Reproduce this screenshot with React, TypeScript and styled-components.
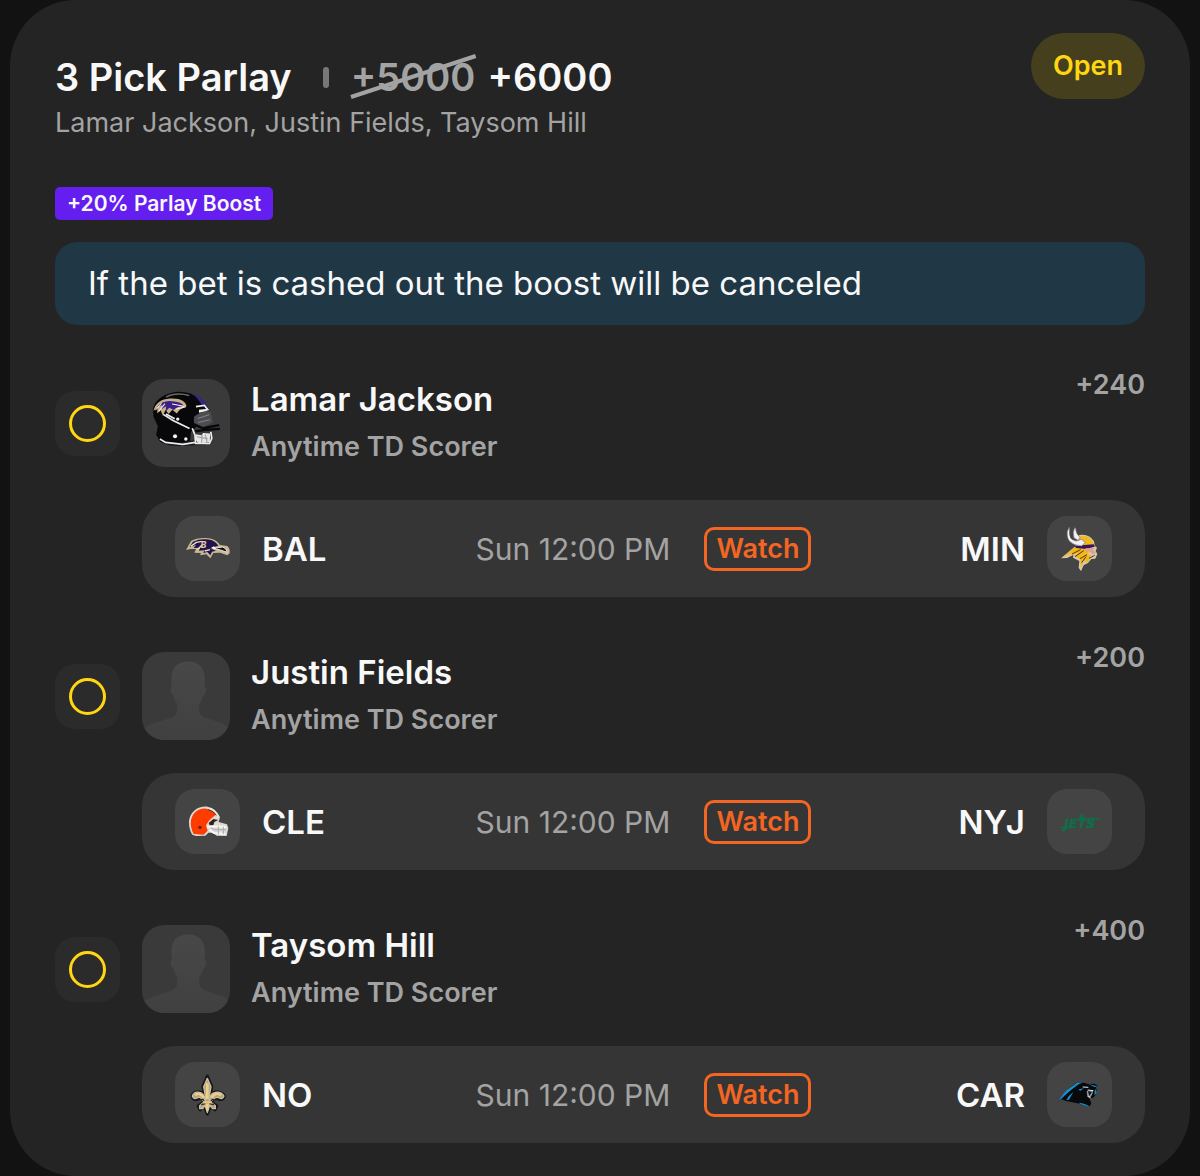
import React from "react";
import styled, { createGlobalStyle } from "styled-components";

const color = {
  page: "#121212",
  card: "#242424",
  panel: "#353535",
  tile: "#444444",
  avatar: "#3a3a3a",
  status: "#2b2b2b",
  text: "#f8f8f8",
  muted: "#a3a3a3",
  yellow: "#ffd60f",
  orange: "#f26522",
  purple: "#641ef0",
  notice: "#203746",
};

const GlobalStyle = createGlobalStyle`
  *, *::before { box-sizing: border-box; }
  body {
    margin: 0;
    background: ${color.page};
    color: ${color.text};
    font-family: Inter, "Liberation Sans", sans-serif;
  }
  h1, h2, p, ul { margin: 0; padding: 0; }
`;

const Page = styled.main`
  padding: 0 10px;
`;

const Card = styled.article`
  padding: 33px 45px;
  border-radius: 66px;
  background: ${color.card};
`;

const Header = styled.header`
  display: flex;
  justify-content: space-between;
  align-items: flex-start;
`;

const Summary = styled.div`
  padding-top: 20px;
`;

const TitleRow = styled.div`
  display: flex;
  align-items: center;
`;

const Title = styled.h1`
  font-size: 38px;
  line-height: 48px;
  font-weight: 600;
`;

const Divider = styled.span`
  width: 6px;
  height: 21px;
  margin: 0 22px 0 31px;
  border-radius: 3px;
  background: #777777;
`;

const Price = styled.span`
  font-size: 38px;
  line-height: 48px;
  font-weight: 600;
`;

const OldPrice = styled.s`
  position: relative;
  margin-right: 12px;
  color: ${color.muted};
  font-size: 38px;
  line-height: 48px;
  font-weight: 600;
  text-decoration: none;
`;

const Strike = styled.svg`
  position: absolute;
  inset: 0;
  width: 100%;
  height: 100%;
  overflow: visible;
`;

const Players = styled.p`
  color: ${color.muted};
  font-size: 27px;
  line-height: 44px;
`;

const Badge = styled.span`
  padding: 16px 22px;
  border-radius: 33px;
  background: #463f1e;
  color: ${color.yellow};
  font-size: 27px;
  line-height: 34px;
  font-weight: 600;
`;

const Boost = styled.span`
  display: block;
  width: fit-content;
  margin-top: 42px;
  padding: 0 12px;
  border-radius: 5px;
  background: ${color.purple};
  font-size: 21px;
  line-height: 33px;
  font-weight: 600;
`;

const Notice = styled.p`
  margin-top: 22px;
  padding: 20px 33px;
  border-radius: 22px;
  background: ${color.notice};
  font-size: 33px;
  line-height: 43px;
`;

const Legs = styled.ul`
  display: grid;
  gap: 55px;
  margin-top: 54px;
  list-style: none;
`;

const Leg = styled.li`
  display: grid;
  grid-template-columns: 65px 1fr;
  column-gap: 22px;
  row-gap: 33px;
  align-items: center;
`;

const Status = styled.span`
  display: grid;
  place-items: center;
  height: 65px;
  border-radius: 20px;
  background: ${color.status};
  &::before {
    content: "";
    width: 37px;
    height: 37px;
    border: 3px solid ${color.yellow};
    border-radius: 50%;
  }
`;

const Pick = styled.div`
  display: flex;
  align-items: center;
  gap: 21px;
`;

const Avatar = styled.span`
  display: block;
  width: 88px;
  height: 88px;
  border-radius: 22px;
  overflow: hidden;
  background: ${color.avatar};
  svg { display: block; width: 100%; height: 100%; }
`;

const PickText = styled.div`
  display: grid;
  gap: 8px;
  flex: 1;
`;

const Name = styled.h2`
  font-size: 33px;
  line-height: 40px;
  font-weight: 600;
`;

const Market = styled.p`
  color: ${color.muted};
  font-size: 27px;
  line-height: 40px;
  font-weight: 600;
`;

const Odds = styled.span`
  align-self: flex-start;
  color: ${color.muted};
  font-size: 27px;
  line-height: 12px;
  font-weight: 600;
`;

const Match = styled.div`
  grid-column: 2;
  display: grid;
  grid-template-columns: 1fr auto 1fr;
  align-items: center;
  padding: 16px 33px;
  border-radius: 33px;
  background: ${color.panel};
`;

const Team = styled.div<{ $away?: boolean }>`
  display: flex;
  flex-direction: ${(p) => (p.$away ? "row-reverse" : "row")};
  align-items: center;
  gap: 22px;
  font-size: 33px;
  line-height: 44px;
  font-weight: 600;
`;

const LogoTile = styled.span`
  width: 65px;
  height: 65px;
  border-radius: 20px;
  background: ${color.tile};
  svg { display: block; width: 100%; height: 100%; }
`;

const Kickoff = styled.div`
  display: flex;
  align-items: center;
  gap: 34px;
`;

const Time = styled.time`
  color: ${color.muted};
  font-size: 30px;
  line-height: 44px;
`;

const Watch = styled.button`
  padding: 0 9px;
  border: 3px solid ${color.orange};
  border-radius: 10px;
  background: transparent;
  color: ${color.orange};
  font: 600 27px/38px Inter, "Liberation Sans", sans-serif;
  cursor: pointer;
`;

const RavensHelmet = () => (
  <svg viewBox="36 28 261 261" aria-hidden="true">
    <path d="M82 205Q98 226 138 227L221 224 238 216 223 209 147 213Z" fill="#191919" />
    <path d="M68 119C72 91 103 69 142 66C191 65 226 90 239 129L241 150 192 153 196 171 181 185 179 211 125 220 91 215 78 193 83 168 70 139Z" fill="#08080a" />
    <path d="M181 71C207 77 225 94 233 117L213 105Q201 82 181 71Z" fill="#35258a" />
    <path d="M107 82Q136 66 176 77" fill="none" stroke="#69696c" strokeWidth="4" />
    <path d="M70 123C75 99 93 88 119 86C149 84 167 95 168 109L148 119 139 130 126 119 115 132 106 119 98 137 91 120 81 130 82 112Z" fill="#c8b18a" />
    <path d="M80 112Q98 88 132 95Q151 96 160 107L141 112 130 120 117 113 107 124 107 109 94 118 96 105Z" fill="#38208a" />
    <path d="M76 120L94 100M86 124L104 101M125 102L161 109M135 118L166 110" stroke="#f1eee5" strokeWidth="3" fill="none" />
    <path d="M196 110L221 106 231 119 205 122M205 126L229 121" fill="none" stroke="#f0f0f0" strokeWidth="5" />
    <path d="M190 140Q212 120 239 124L246 157 215 172 190 162Z" fill="#4c4c51" />
    <path d="M201 145L235 134M203 157L237 149" stroke="#818187" strokeWidth="3" />
    <path d="M99 133L128 151 177 175M107 132L133 146M185 174L193 194 195 219 236 219 243 204 240 185M89 206L106 216 157 222 194 216" fill="none" stroke="#ededed" strokeWidth="5" />
    <path d="M183 159L217 174 265 165M194 183L226 179 267 176" fill="none" stroke="#08080a" strokeWidth="7" />
    <path d="M195 192L213 195 217 188 238 190 237 215 204 220 196 210Z" fill="#e6e6e6" />
    <path d="M200 199L231 205M214 193L213 217M224 193L229 216" stroke="#99999b" strokeWidth="3" />
    <g fill="#f2f2f2"><circle cx="142" cy="147" r="5" /><circle cx="134" cy="198" r="6" /><circle cx="166" cy="206" r="5" /></g>
  </svg>
);

const Silhouette = () => (
  <svg viewBox="305 38 262 262" aria-hidden="true">
    <defs>
      <linearGradient id="body" x1="0" y1="0" x2="0" y2="1">
        <stop offset="0" stopColor="#484848" />
        <stop offset="1" stopColor="#404040" />
      </linearGradient>
    </defs>
    <path d="M305 272Q318 257 347 249L396 232Q410 225 410 211V193Q401 181 398 167Q391 163 390 148L394 141C388 97 398 67 442 66C484 66 497 96 491 140L496 147Q495 165 487 169Q484 184 475 195V211Q476 226 490 232L539 249Q557 257 568 269V300H305Z" fill="url(#body)" />
  </svg>
);

const Ravens = () => (
  <svg viewBox="28 33 195 195" aria-hidden="true">
    <path d="M61 135L76 108Q91 99 115 99C141 98 154 107 163 120L185 123Q194 131 192 145L185 151L163 143L143 144L134 160L122 148L103 151L106 144L86 143L91 132L75 132Z" fill="#c7b893" />
    <path d="M71 127L82 110Q103 101 120 103C140 103 151 112 158 122L146 126L138 132L151 137L139 140L134 151L125 141L113 144L116 136L99 137L104 128L84 129L91 120Z" fill="#24124f" />
    <path d="M75 124L92 112 110 109M95 134L109 120M117 138L133 134" fill="none" stroke="#ece1be" strokeWidth="4" />
    <path d="M144 130L171 126Q183 130 185 142L164 135Z" fill="#111" stroke="#e8e4dc" strokeWidth="3" />
    <text x="105" y="129" fontFamily="Inter, sans-serif" fontSize="25" fontWeight="800" fontStyle="italic" fill="#dccb9c">B</text>
    <path d="M134 130L145 124 151 131Z" fill="#fff" />
  </svg>
);

const Vikings = () => (
  <svg viewBox="22 33 195 195" aria-hidden="true">
    <path d="M64 160L87 140 108 123 112 101 119 90Q149 85 163 109L165 122 172 128 168 138 173 147 167 161 155 162 145 174 132 181 124 199 117 188 119 168 100 158 101 150 82 159Z" fill="#d8c8ae" />
    <path d="M119 94Q148 89 160 111L161 121 109 121ZM70 156L105 127 151 135 142 151 154 147 148 167 140 172 133 165 124 190 122 164 104 153 113 144 91 152 100 143Z" fill="#f3b919" />
    <path d="M105 122L162 118 165 125 139 132 109 129Z" fill="#37145d" />
    <path d="M137 130L166 128 160 134 169 143 159 148 149 139 140 143Z" fill="#dfa18f" />
    <path d="M97 147L123 134M106 155L132 137M121 161L142 149M126 173L139 155M148 160L165 151" fill="none" stroke="#57330f" strokeWidth="3" />
    <path d="M89 66L83 79Q80 99 91 110Q103 122 126 123L137 112 125 103 110 108Q94 106 91 91ZM105 68Q98 82 103 99L116 106 121 97Q108 86 108 70Z" fill="#f2f1f3" stroke="#706e75" strokeWidth="2" />
    <path d="M94 72Q87 94 99 103" fill="none" stroke="#444" strokeWidth="4" />
  </svg>
);

const Browns = () => (
  <svg viewBox="28 33 195 195" aria-hidden="true">
    <path d="M80 170Q69 153 70 128C75 98 99 83 126 86Q151 91 163 117L159 132L184 139L188 151L183 174L153 173L141 164L128 164L119 173L91 174Z" fill="#ddd9d3" />
    <path d="M84 168Q73 148 76 125C85 95 108 87 132 94Q147 99 152 109L131 127L121 142L126 158L114 170Z" fill="#ff3c00" />
    <path d="M124 91Q151 96 158 119M133 91Q150 98 155 111" fill="none" stroke="#f0e7de" strokeWidth="4" />
    <path d="M126 94Q145 99 152 112" fill="none" stroke="#583021" strokeWidth="3" />
    <path d="M129 135L143 123 158 126 146 132 143 142 132 142Z" fill="#392117" />
    <circle cx="103" cy="148" r="5" fill="#5d2515" />
    <path d="M124 147L147 145 182 147M131 155L145 165 179 168" fill="none" stroke="#f8f8f5" strokeWidth="6" />
    <path d="M136 149L146 155 181 155M158 145L158 168M173 146L173 168" fill="none" stroke="#a9adad" strokeWidth="3" />
  </svg>
);

const Jets = () => (
  <svg viewBox="22 33 195 195" aria-hidden="true">
    <text x="74" y="150" fontFamily="DejaVu Sans, sans-serif" fontSize="38" fontWeight="700" fontStyle="italic" fill="#126b49" stroke="#126b49" strokeWidth="2">JETS</text>
    <path d="M119 119L126 103 134 119 182 120 178 124 114 124ZM58 150L70 144 88 145 86 151Z" fill="#126b49" />
  </svg>
);

const Saints = () => (
  <svg viewBox="28 33 195 195" aria-hidden="true">
    <g stroke="#171717" strokeWidth="10" strokeLinejoin="round" fill="#171717">
      <path d="M125 76L112 107 119 140 115 162 125 189 135 162 131 140 138 107Z" />
      <path d="M118 143C116 119 86 118 79 135Q82 150 98 143L107 141 115 154 98 165 103 176 119 164M132 143C134 119 164 118 176 135Q173 150 157 143L148 141 136 154 153 165 148 176 131 164" />
    </g>
    <g stroke="#c9bfae" strokeWidth="4" strokeLinejoin="round" fill="#b9a47b">
      <path d="M125 82L114 107 120 140 118 162 125 185 132 162 130 140 136 107Z" />
      <path d="M118 145C116 119 86 118 80 135Q84 147 94 141Q104 135 109 147L116 152 102 164 102 173 111 173 119 162ZM132 145C134 119 164 118 175 135Q171 147 161 141Q151 135 141 147L134 152 149 164 149 173 141 173 131 162Z" />
    </g>
    <path d="M88 133Q102 121 114 140M138 140Q150 121 166 133M125 97V144M125 158V178" fill="none" stroke="#f0cf83" strokeWidth="8" />
    <path d="M104 149Q112 141 115 151M148 149Q140 141 136 151M107 161L119 158M131 158L145 161" stroke="#302b25" strokeWidth="4" fill="none" />
    <path d="M112 154H139" stroke="#e4c681" strokeWidth="6" />
  </svg>
);

const Panthers = () => (
  <svg viewBox="22 33 195 195" aria-hidden="true">
    <path d="M55 153Q71 123 94 109L108 97 128 94 145 99 165 98 176 106 169 109 172 125 161 140 149 141 155 157 149 168 120 158 79 150 66 145Z" fill="#08090b" />
    <path d="M55 153Q72 121 94 109L111 96 132 94 117 100 99 113 80 129ZM80 147Q88 132 101 123L96 132 88 146ZM117 115L133 112 121 120ZM145 98L160 103 176 106 164 108ZM119 155Q137 157 149 166L148 168 120 158ZM166 113L172 125 164 133Z" fill="#168fcc" />
    <path d="M141 120L161 118 158 129 151 142 143 137Z" fill="#8f969b" />
    <path d="M145 121L157 122 149 135Z" fill="#111" />
    <path d="M144 117L161 119M146 136L152 140M129 108L146 109" stroke="#e4eaed" strokeWidth="3" />
  </svg>
);

interface LegData {
  name: string;
  odds: string;
  portrait: React.ComponentType;
  home: string;
  homeLogo: React.ComponentType;
  away: string;
  awayLogo: React.ComponentType;
}

const legs: LegData[] = [
  { name: "Lamar Jackson", odds: "+240", portrait: RavensHelmet, home: "BAL", homeLogo: Ravens, away: "MIN", awayLogo: Vikings },
  { name: "Justin Fields", odds: "+200", portrait: Silhouette, home: "CLE", homeLogo: Browns, away: "NYJ", awayLogo: Jets },
  { name: "Taysom Hill", odds: "+400", portrait: Silhouette, home: "NO", homeLogo: Saints, away: "CAR", awayLogo: Panthers },
];

export default function App() {
  return (
    <Page>
      <GlobalStyle />
      <Card>
        <Header>
          <Summary>
            <TitleRow>
              <Title>3 Pick Parlay</Title>
              <Divider />
              <OldPrice>
                +5000
                <Strike viewBox="0 0 122 48" preserveAspectRatio="none" aria-hidden="true">
                  <path d="M0 44L122 3" stroke={color.muted} strokeWidth="4" />
                </Strike>
              </OldPrice>
              <Price>+6000</Price>
            </TitleRow>
            <Players>Lamar Jackson, Justin Fields, Taysom Hill</Players>
          </Summary>
          <Badge>Open</Badge>
        </Header>
        <Boost>+20% Parlay Boost</Boost>
        <Notice>If the bet is cashed out the boost will be canceled</Notice>
        <Legs>
          {legs.map((leg) => (
            <Leg key={leg.name}>
              <Status role="img" aria-label="Open" />
              <Pick>
                <Avatar><leg.portrait /></Avatar>
                <PickText>
                  <Name>{leg.name}</Name>
                  <Market>Anytime TD Scorer</Market>
                </PickText>
                <Odds>{leg.odds}</Odds>
              </Pick>
              <Match>
                <Team>
                  <LogoTile><leg.homeLogo /></LogoTile>
                  {leg.home}
                </Team>
                <Kickoff>
                  <Time>Sun 12:00 PM</Time>
                  <Watch type="button">Watch</Watch>
                </Kickoff>
                <Team $away>
                  <LogoTile><leg.awayLogo /></LogoTile>
                  {leg.away}
                </Team>
              </Match>
            </Leg>
          ))}
        </Legs>
      </Card>
    </Page>
  );
}
